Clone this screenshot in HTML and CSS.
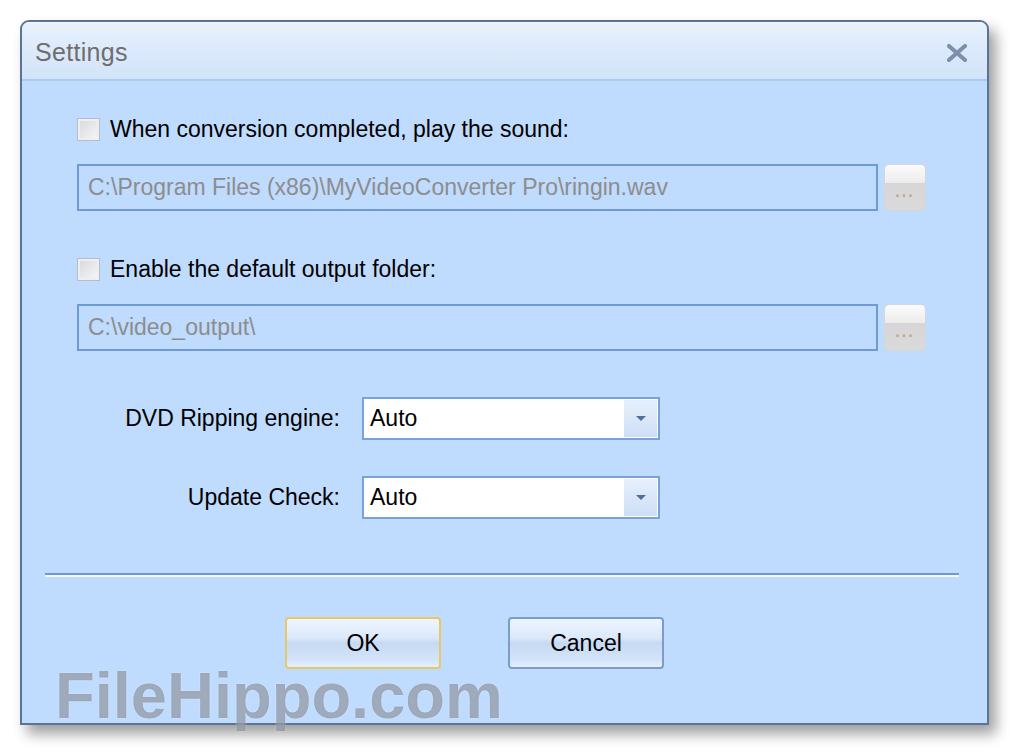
FILE: index.html
```html
<!DOCTYPE html>
<html lang="en">
<head>
    <meta charset="UTF-8">
    <title>Settings</title>
    <link rel="stylesheet" href="styles.css">
</head>
<body>
    <div class="window">
        <div class="titlebar">
            <span class="title">Settings</span>
            <span class="close">
                <svg width="20" height="18" viewBox="0 0 20 18">
                    <path d="M2 2 L18 16 M18 2 L2 16" stroke="#7d8fab" stroke-width="4" stroke-linecap="square"/>
                </svg>
            </span>
        </div>

        <div class="content">
            <label class="check-row">
                <span class="checkbox"></span>
                When conversion completed, play the sound:
            </label>
            <div class="path-row">
                <div class="path-field">C:\Program Files (x86)\MyVideoConverter Pro\ringin.wav</div>
                <div class="browse"><span>...</span></div>
            </div>

            <label class="check-row second">
                <span class="checkbox"></span>
                Enable the default output folder:
            </label>
            <div class="path-row">
                <div class="path-field">C:\video_output\</div>
                <div class="browse"><span>...</span></div>
            </div>

            <div class="select-row first">
                <span class="select-label">DVD Ripping engine:</span>
                <div class="select">
                    <span class="select-value">Auto</span>
                    <span class="select-btn"><i class="arrow"></i></span>
                </div>
            </div>
            <div class="select-row">
                <span class="select-label">Update Check:</span>
                <div class="select">
                    <span class="select-value">Auto</span>
                    <span class="select-btn"><i class="arrow"></i></span>
                </div>
            </div>

            <div class="separator"></div>

            <div class="buttons">
                <button class="btn focused">OK</button>
                <button class="btn">Cancel</button>
            </div>
        </div>
    </div>
    <div class="watermark">FileHippo.com</div>
</body>
</html>
```

FILE: styles.css
```css
body {
    margin: 0;
    padding: 20px 0 0 20px;
    background-color: #fff;
    font-family: 'Liberation Sans', Arial, sans-serif;
    width: 1020px;
    height: 755px;
    box-sizing: border-box;
    overflow: hidden;
    position: relative;
}
.window {
    width: 969px;
    height: 705px;
    box-sizing: border-box;
    border: 2px solid #5a7397;
    border-radius: 9px 9px 0 0;
    background-color: #bfdbfd;
    box-shadow: 7px 9px 14px rgba(0, 0, 0, 0.38);
    overflow: hidden;
}
.titlebar {
    height: 56px;
    display: flex;
    align-items: center;
    justify-content: space-between;
    padding: 0 20px 0 13px;
    background: linear-gradient(#e9f2fd 0%, #dceafb 45%, #d3e4f8 100%);
    border-top: 1px solid #f5f9ff;
    border-bottom: 2px solid #a9cbf3;
}
.title {
    font-size: 25px;
    color: #6e6e6e;
    padding-top: 2px;
    letter-spacing: 0.3px;
}
.close {
    display: flex;
    padding-top: 4px;
}
.content {
    display: flex;
    flex-direction: column;
    padding: 37px 0 0 55px;
}
.check-row {
    display: flex;
    align-items: center;
    gap: 10px;
    height: 23px;
    font-size: 23px;
    color: #000;
}
.check-row.second {
    margin-top: 47px;
}
.checkbox {
    width: 21px;
    height: 21px;
    border: 1px solid #b5bdc9;
    background: linear-gradient(135deg, #d6d8dc, #f7f7f7);
    box-shadow: inset 0 0 0 2px #eceef1;
    flex-shrink: 0;
}
.path-row {
    display: flex;
    gap: 6px;
    margin-top: 23px;
    height: 47px;
}
.path-field {
    width: 801px;
    box-sizing: border-box;
    border: 2px solid #6e9ad5;
    padding: 0 0 0 9px;
    display: flex;
    align-items: center;
    font-size: 23px;
    color: #8d8d8d;
}
.browse {
    width: 42px;
    border: 1px solid #d4d6da;
    border-radius: 5px;
    box-sizing: border-box;
    background: linear-gradient(#fbfbfb 0%, #ececec 40%, #d6d6d6 41%, #dadada 100%);
    display: flex;
    align-items: center;
    justify-content: center;
    padding-top: 8px;
}
.browse span {
    font-size: 16px;
    font-weight: bold;
    color: #bba98a;
    letter-spacing: 2px;
}
.select-row {
    display: flex;
    align-items: center;
    margin-top: 36px;
    height: 43px;
}
.select-row.first {
    margin-top: 46px;
}
.select-label {
    width: 263px;
    text-align: right;
    font-size: 23px;
    color: #000;
}
.select {
    margin-left: 22px;
    width: 298px;
    height: 43px;
    box-sizing: border-box;
    border: 2px solid #7aa2d8;
    background-color: #fff;
    display: flex;
    align-items: center;
    justify-content: space-between;
}
.select-value {
    font-size: 23px;
    padding-left: 6px;
}
.select-btn {
    width: 33px;
    height: 37px;
    margin-right: 1px;
    background: linear-gradient(#e6effc 0%, #dbe7f9 50%, #cddff6 100%);
    display: flex;
    align-items: center;
    justify-content: center;
}
.arrow {
    width: 0;
    height: 0;
    border-left: 5px solid transparent;
    border-right: 5px solid transparent;
    border-top: 5px solid #4f6f9d;
}
.separator {
    margin: 54px 0 0 -32px;
    width: 914px;
    height: 2px;
    background-color: #7099d1;
    border-bottom: 2px solid #f4f8ff;
}
.buttons {
    display: flex;
    gap: 67px;
    margin: 40px 0 0 208px;
}
.btn {
    width: 156px;
    height: 52px;
    border: 2px solid #7c9cc9;
    border-radius: 4px;
    background: linear-gradient(#eef5fe 0%, #dbe8fa 40%, #c6daf4 50%, #d3e4f9 85%, #e4effd 100%);
    font-family: 'Liberation Sans', Arial, sans-serif;
    font-size: 23px;
    color: #000;
    cursor: pointer;
}
.btn.focused {
    border-color: #e8c766;
}
.watermark {
    position: absolute;
    left: 55px;
    top: 658px;
    font-size: 65px;
    font-weight: bold;
    color: rgba(100, 110, 125, 0.52);
    text-shadow: 0 0 2px rgba(255, 255, 255, 0.5);
}
```
